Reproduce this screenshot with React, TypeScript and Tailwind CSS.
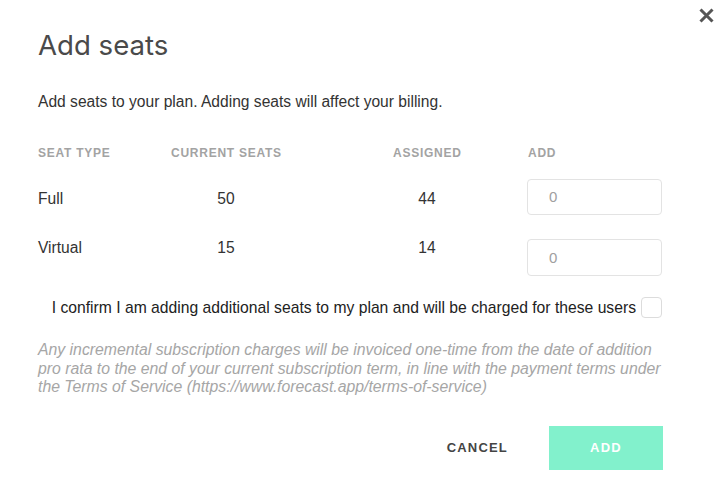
import React from "react";

export default function App() {
  const body = { fontFamily: '"Liberation Sans", Arial, sans-serif' };
  return (
    <div className="relative w-[722px] h-[498px] bg-white overflow-hidden" style={body}>
      <button className="absolute left-[699px] top-[8px] w-[15px] h-[15px] p-0">
        <svg width="15" height="15" viewBox="0 0 15 15">
          <path d="M1.5 1.5 L13.5 13.5 M13.5 1.5 L1.5 13.5" stroke="#555" strokeWidth="3" strokeLinecap="butt" />
        </svg>
      </button>
      <div className="flex flex-col pl-[38px] pr-[60px] pt-[28px]">
        <h1 className="text-[27.6px] leading-[34px] text-[#4a4a4a] font-normal" style={{ fontFamily: 'Inter, sans-serif' }}>
          Add seats
        </h1>
        <p className="mt-[31px] text-[15.6px] leading-[18px] text-[#333]">
          Add seats to your plan. Adding seats will affect your billing.
        </p>
        <div className="mt-[34px] flex text-[12px] leading-[16px] tracking-[0.75px] text-[#a3a3a3] font-semibold">
          <div className="w-[133px]">SEAT TYPE</div>
          <div className="w-[222px]">CURRENT SEATS</div>
          <div className="w-[135px]">ASSIGNED</div>
          <div>ADD</div>
        </div>
        <div className="mt-[18px] flex items-center h-[36px] text-[15.6px] text-[#333]">
          <div className="w-[133px] pt-[3px]">Full</div>
          <div className="w-[222px] pt-[3px]"><span className="inline-block w-[110px] text-center">50</span></div>
          <div className="w-[135px] pt-[3px]"><span className="inline-block w-[68px] text-center">44</span></div>
          <div className="ml-[-1px] w-[135px] h-[36px] border border-[#e3e3e3] rounded-[4px] flex items-center pl-[21px] text-[15px] text-[#a0a0a0]">0</div>
        </div>
        <div className="mt-[24px] flex items-start h-[37px] text-[15.6px] leading-[18px] text-[#333]">
          <div className="w-[133px]">Virtual</div>
          <div className="w-[222px]"><span className="inline-block w-[110px] text-center">15</span></div>
          <div className="w-[135px]"><span className="inline-block w-[68px] text-center">14</span></div>
          <div className="ml-[-1px] w-[135px] h-[37px] border border-[#e3e3e3] rounded-[4px] flex items-center pl-[21px] text-[15px] text-[#a0a0a0]">0</div>
        </div>
        <div className="mt-[21px] flex items-center justify-end gap-[5px]">
          <span className="text-[15.7px] leading-[18px] text-[#222]">
            I confirm I am adding additional seats to my plan and will be charged for these users
          </span>
          <span className="w-[21px] h-[21px] border border-[#dcdcdc] rounded-[4px] bg-white"></span>
        </div>
        <p className="mt-[23px] text-[15.8px] leading-[18.5px] italic text-[#a6a6a6]">
          Any incremental subscription charges will be invoiced one-time from the date of addition pro rata to the end of your current subscription term, in line with the payment terms under the Terms of Service (https://www.forecast.app/terms-of-service)
        </p>
        <div className="mt-[29px] flex justify-end items-center">
          <button className="mr-[41px] text-[13px] font-bold tracking-[1.2px] text-[#444]">CANCEL</button>
          <button className="w-[114px] h-[44px] bg-[#82f1cc] text-white text-[13px] font-bold tracking-[1.2px] -mr-px">ADD</button>
        </div>
      </div>
    </div>
  );
}
